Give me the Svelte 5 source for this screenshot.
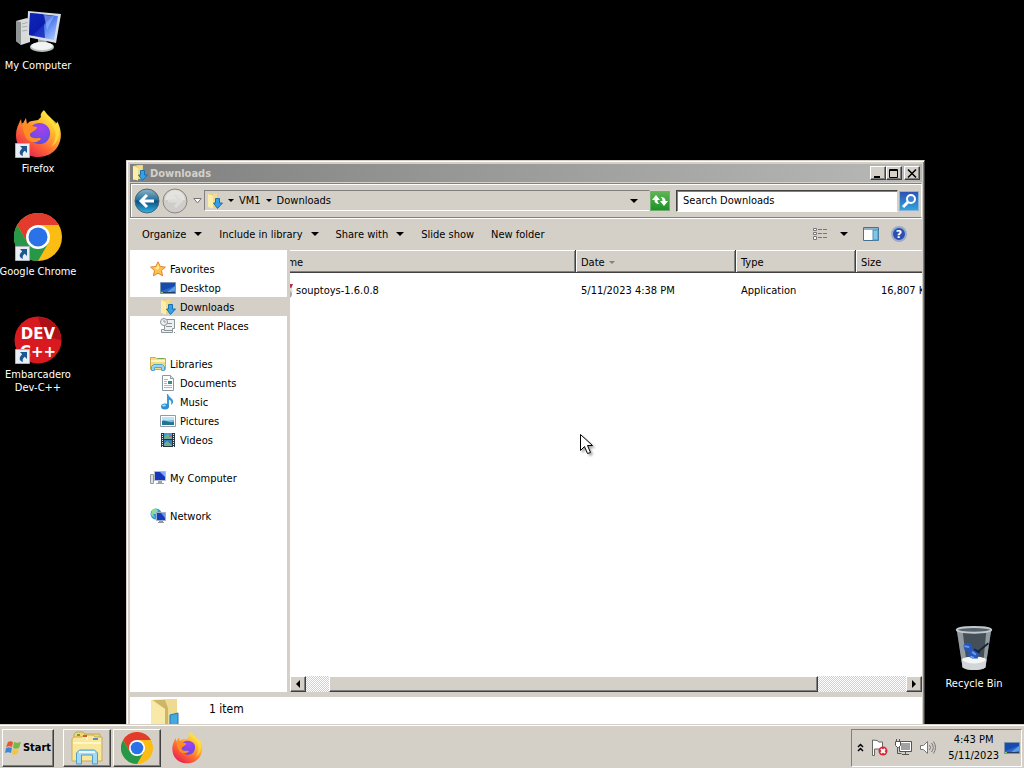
<script lang="ts">
  type IconName = string;

  interface NavItem {
    label: string;
    icon: IconName;
  }

  interface NavGroup extends NavItem {
    items: NavItem[];
  }

  const shortcuts = [
    { label: 'My Computer', icon: 'computer', link: false },
    { label: 'Firefox', icon: 'firefox', link: true },
    { label: 'Google Chrome', icon: 'chrome', link: true },
    { label: 'Embarcadero\nDev-C++', icon: 'devcpp', link: true }
  ];

  const navGroups: NavGroup[] = [
    {
      label: 'Favorites',
      icon: 'star',
      items: [
        { label: 'Desktop', icon: 'screen' },
        { label: 'Downloads', icon: 'downloads' },
        { label: 'Recent Places', icon: 'recent' }
      ]
    },
    {
      label: 'Libraries',
      icon: 'libraries',
      items: [
        { label: 'Documents', icon: 'document' },
        { label: 'Music', icon: 'music' },
        { label: 'Pictures', icon: 'picture' },
        { label: 'Videos', icon: 'video' }
      ]
    },
    { label: 'My Computer', icon: 'pc', items: [] },
    { label: 'Network', icon: 'network', items: [] }
  ];

  const commands = [
    { label: 'Organize', menu: true },
    { label: 'Include in library', menu: true },
    { label: 'Share with', menu: true },
    { label: 'Slide show', menu: false },
    { label: 'New folder', menu: false }
  ];

  const files = [
    { name: 'souptoys-1.6.0.8', date: '5/11/2023 4:38 PM', type: 'Application', size: '16,807 KB' }
  ];

  let selected = $state('Downloads');
  let query = $state('');
</script>

{#snippet arrow()}
  <svg class="arrow" viewBox="0 0 8 4" width="8" height="4" aria-hidden="true"><path d="M0 0h8L4 4z" /></svg>
{/snippet}

{#snippet icon(name: IconName, size: number)}
  {#if name === 'computer'}
    <svg width={size} height={size} viewBox="0 0 48 48" aria-hidden="true">
      <defs>
        <linearGradient id="pc-screen" x1="0" y1="0" x2="1" y2="1">
          <stop offset="0" stop-color="#1a3fd0" /><stop offset=".45" stop-color="#0d1fa8" />
          <stop offset=".5" stop-color="#4a78f0" /><stop offset="1" stop-color="#b8d4ff" />
        </linearGradient>
      </defs>
      <path d="M2 14l11-3 3 2v22L7 38l-5-4z" fill="#d9dbdb" />
      <path d="M2 14l5 1v23l-5-4z" fill="#8f9494" />
      <path d="M8 17l7-2M8 20l7-1M8 24l7-1" stroke="#aaa" />
      <path d="M24 31l8 1 1 5h-9z" fill="#a3a7a8" />
      <ellipse cx="28" cy="40" rx="12" ry="5" fill="#b9bebe" />
      <ellipse cx="28" cy="39" rx="11" ry="4" fill="#f2f4f4" />
      <path d="M14 4l33 3-5 29-29-6z" fill="#d8dde4" />
      <path d="M16 6l28 3-4 24-25-5z" fill="url(#pc-screen)" />
      <path d="M16 6l13 1 2 24-16-3z" fill="#0b1cb0" opacity=".75" />
      <path d="M30 8l10 1-7 14z" fill="#9dbcff" opacity=".6" />
    </svg>
  {:else if name === 'firefox'}
    <svg width={size} height={size} viewBox="0 0 48 48" aria-hidden="true">
      <defs>
        <linearGradient id="ff-body" x1=".85" y1=".05" x2=".2" y2=".95">
          <stop offset="0" stop-color="#fff44f" /><stop offset=".35" stop-color="#ffb52e" />
          <stop offset=".65" stop-color="#ff6a35" /><stop offset="1" stop-color="#e8204f" />
        </linearGradient>
        <radialGradient id="ff-globe" cx=".55" cy=".25" r=".8">
          <stop offset="0" stop-color="#a640f0" /><stop offset="1" stop-color="#5a4fe0" />
        </radialGradient>
      </defs>
      <path d="M30 0c2 5 8 7 11 14 3-1 2-3 2-3 5 9 5 18 1 25-4 7-11 11-20 11C11 47 2 38 2 25c0-6 2-10 5-16l1 6 4-7 1 6c2-2 3-3 5-3l6-1 3-3c-1-3 1-5 3-7z" fill="url(#ff-body)" />
      <path d="M18 16c4-4 12-4 16 1 4 5 2 12-2 15-5 4-13 2-16-3-2-4 0-9 2-13z" fill="url(#ff-globe)" />
      <path d="M8 13c4 0 7 1 10 3l5 1c0 3-4 4-6 6-2 1-1 5 3 5 4 1 6-1 7 1-4 5-13 4-16-3-2-5-2-8-3-13z" fill="#ff8d22" />
      <path d="M29 2c1 6 8 9 11 16 3 7 1 14-3 19 7-4 10-12 7-22-3-5-11-8-13-14z" fill="#ffdf3c" opacity=".75" />
    </svg>
  {:else if name === 'chrome'}
    <svg width={size} height={size} viewBox="0 0 48 48" aria-hidden="true">
      <circle cx="24" cy="24" r="24" fill="#fbbc14" />
      <path d="M3.2 12A24 24 0 0 1 44.8 12H24L13.600 30z" fill="#e33b2e" />
      <path d="M3.2 12A24 24 0 0 0 24 48l10.400-18H13.600z" fill="#279847" />
      <circle cx="24" cy="24" r="12" fill="#fff" />
      <circle cx="24" cy="24" r="9.500" fill="#2b72e8" />
    </svg>
  {:else if name === 'devcpp'}
    <svg width={size} height={size} viewBox="0 0 48 48" aria-hidden="true">
      <circle cx="24" cy="24" r="23.500" fill="#d8191f" />
      <path d="M24 1a23 23 0 0 1 23 23L30 20z" fill="#ad1118" />
      <text x="24" y="23" text-anchor="middle" class="dev">DEV</text>
      <text x="24" y="41" text-anchor="middle" class="dev">C++</text>
    </svg>
  {:else if name === 'recycle'}
    <svg width={size} height={size} viewBox="0 0 48 48" aria-hidden="true">
      <path d="M6 4h36l-6 39c-4 4-20 4-24 0z" fill="#454f57" />
      <path d="M6 4h6l5 41-5-2zM42 4h-5l-4 41 3-2z" fill="#929ba0" />
      <path d="M11 35c7-4 19-4 26 0l-1 8c-4 4-20 4-24 0z" fill="#d2d6d6" />
      <path d="M12 36c6 4 18 4 24 0v-2c-6-3-18-3-24 0z" fill="#f4f5f5" />
      <path d="M13 20l4-3 4 2 1 5 4-1 3 5-1 6h-6l-5-3 2-4-5-2z" fill="#2456bd" />
      <path d="M14 21l5 1M22 27l4 3M20 32l4 1" stroke="#679bf0" stroke-width="2" />
      <path d="M28 27l11-9M24 24l6 4" stroke="#172333" stroke-width="2" />
      <ellipse cx="24" cy="4" rx="18" ry="3" fill="#556069" stroke="#c0c9ce" stroke-width="2" />
    </svg>
  {:else if name === 'star'}
    <svg width={size} height={size} viewBox="0 0 16 16" aria-hidden="true">
      <path d="M8 .8l2.200 4.700 5.200.6-3.900 3.500 1.100 5.200L8 12.200l-4.600 2.600 1.100-5.200L.6 6.100l5.200-.6z" fill="#ffc04a" stroke="#dc8733" />
      <path d="M8 3l1.400 3.500L8 9 4 7l2.600-.5z" fill="#ffec9e" />
    </svg>
  {:else if name === 'screen'}
    <svg width={size} height={size} viewBox="0 0 16 16" aria-hidden="true">
      <path d="M.5 2.500h15v11H.5z" fill="#2c66c9" stroke="#7995ad" />
      <path d="M1 3h14v3L1 11z" fill="#174bb0" /><path d="M6 13l9-7v5z" fill="#5b9de2" />
      <path d="M1 12h14v1H1z" fill="#263d61" /><path d="M1 12h2v1H1z" fill="#7fce59" />
    </svg>
  {:else if name === 'downloads'}
    <svg width={size} height={size} viewBox="0 0 16 16" aria-hidden="true">
      <path d="M1 1l5-1h5v14H6l-5 1z" fill="#ead27c" />
      <path d="M1 1l5 2v12.500L1 14z" fill="#fbedaa" /><path d="M6 1l4-1v13H6z" fill="#f2db8b" />
      <path d="M8.500 5.500h4V10h3L10.500 15.500 6.500 10h2z" fill="#36a0e2" stroke="#1672b5" />
    </svg>
  {:else if name === 'recent'}
    <svg width={size} height={size} viewBox="0 0 16 16" fill="#eef0f0" stroke="#8b9599" aria-hidden="true">
      <path d="M4.500 1.500h10v9h-2v4h-11v-3h3z" />
      <path d="M6 5.500h6M6 8.500h6M4 12.500h9M14 14.500h1" /><circle cx="4" cy="4" r="3.500" /><path d="M4 2v2h2" />
    </svg>
  {:else if name === 'libraries'}
    <svg width={size} height={size} viewBox="0 0 16 16" aria-hidden="true">
      <path d="M.5 1.500h5l1 1h9v11H.5z" fill="#f4dc83" stroke="#c8ac55" />
      <path d="M1 4h14v2H1z" fill="#fff5c0" /><path d="M8 2h6v1H8z" fill="#6fae58" />
      <path d="M1.500 14.500v-4l2-2h9l2 2v4h-3v-3h-7v3z" fill="#9ad4ec" stroke="#5aa3c9" />
    </svg>
  {:else if name === 'document'}
    <svg width={size} height={size} viewBox="0 0 16 16" aria-hidden="true">
      <path d="M2.500.5h8l3 3v12h-11z" fill="#fff" stroke="#8799a5" /><path d="M10.500.5v3h3" fill="#dfe9ef" stroke="#8799a5" />
      <path d="M4 4.500h4M4 6.500h3M4 8.500h3M4 10.500h8M4 12.500h8" stroke="#abb8c0" /><path d="M8 6h4v3H8z" fill="#398c80" />
    </svg>
  {:else if name === 'music'}
    <svg width={size} height={size} viewBox="0 0 16 16" aria-hidden="true">
      <path d="M8 0c1 4 6 4 5 9l-2 2c1-4-1-5-2-5v7H7V0z" fill="#3c9bd6" />
      <ellipse cx="5" cy="12.500" rx="4" ry="3" fill="#2f8fd0" /><ellipse cx="4" cy="11.500" rx="2" ry="1" fill="#9cdcf8" />
    </svg>
  {:else if name === 'picture'}
    <svg width={size} height={size} viewBox="0 0 16 16" aria-hidden="true">
      <path d="M.5 2.500h15v11H.5z" fill="#fff" stroke="#8f9ca5" /><path d="M2 4h12v8H2z" fill="#6db9e4" />
      <path d="M2 4h12v3L2 8z" fill="#bce3f5" /><path d="M2 8c3-2 5 2 12 1v3H2z" fill="#237392" />
    </svg>
  {:else if name === 'video'}
    <svg width={size} height={size} viewBox="0 0 16 16" aria-hidden="true">
      <path d="M1 1h14v14H1z" fill="#26363f" /><path d="M4 1h8v6H4z" fill="#3f9cd4" /><path d="M4 8h8v6H4z" fill="#347dc1" />
      <path d="M4 5l4-3 4 4v1H4zM4 12l3-3 5 4v1H4z" fill="#73ac91" /><path d="M9 3h3v2H9z" fill="#c26861" />
      <path d="M2.500 2v13M13.500 2v13" stroke="#e8f1f4" stroke-dasharray="1 1" />
    </svg>
  {:else if name === 'pc'}
    <svg width={size} height={size} viewBox="0 0 16 16" aria-hidden="true">
      <path d="M.5 4.500h3v9h-3z" fill="#dde0e0" stroke="#949a9c" /><path d="M4.500 1.500h11v9h-11z" fill="#1738ba" stroke="#b6bdc9" />
      <path d="M10 2h5v5z" fill="#7faaf4" /><path d="M8 11h4v2h2v1H6v-1h2z" fill="#9ca3aa" />
    </svg>
  {:else if name === 'network'}
    <svg width={size} height={size} viewBox="0 0 16 16" aria-hidden="true">
      <circle cx="6" cy="6" r="5.500" fill="#2f99d7" /><path d="M2 2l4-2 2 3-2 3H3l2 4-4-3z" fill="#8cdb9b" />
      <path d="M6.500 4.500h9v8h-9z" fill="#173bc0" stroke="#9eb0c5" /><path d="M11 5h4v5z" fill="#6497ed" />
      <path d="M9 13h4v1h1v1H8v-1h1z" fill="#8d979f" />
    </svg>
  {:else if name === 'explorer'}
    <svg width={size} height={size} viewBox="0 0 34 34" aria-hidden="true">
      <path d="M4 3l2-2h7l2 2h15v14H4z" fill="#efd675" stroke="#c7a851" />
      <path d="M2 8l2-2h8l2-2h9l2 2h7v24H2z" fill="#f9e79b" stroke="#c9ad59" />
      <path d="M3 12h28M17 5v4" stroke="#fff6c8" stroke-width="2" />
      <path d="M7 3h3v2H7z" fill="#62a451" /><path d="M13 4h4v2h-4z" fill="#d35a3d" /><path d="M23 7h5v2h-5z" fill="#5396c5" />
      <path d="M6.500 33v-11l3-3h15l3 3v11h-5v-9h-11v9z" fill="#a6daf0" stroke="#4f9fca" />
      <path d="M9 21h16" stroke="#e6f8ff" stroke-width="2" />
    </svg>
  {/if}
{/snippet}

<div class="screen">
  <main class="desktop">
    <div class="shortcuts">
      {#each shortcuts as item}
        <button class="shortcut">
          <span class="shortcut-icon">
            {@render icon(item.icon, 48)}
            {#if item.link}
              <svg class="link-mark" viewBox="0 0 15 15" width="15" height="15" aria-hidden="true">
                <path d="M.5.5h14v14H.5z" fill="#e8eef3" stroke="#a9b4bd" />
                <path d="M5 3h7v7L9.800 7.800C7.500 9.500 7.400 11 8 13 4 12 3.500 8.500 7.200 5.200z" fill="#1d5791" />
              </svg>
            {/if}
          </span>
          <span>{item.label}</span>
        </button>
      {/each}
    </div>

    <button class="shortcut bin">
      <span class="shortcut-icon">{@render icon('recycle', 46)}</span>
      <span>Recycle Bin</span>
    </button>

    <section class="window" aria-label="Downloads">
      <header class="title-bar">
        {@render icon('downloads', 16)}
        <h1>Downloads</h1>
        <div class="caption-buttons">
          <button class="raised" aria-label="Minimize">
            <svg viewBox="0 0 10 9" width="10" height="9"><path d="M1 7h6v2H1z" /></svg>
          </button>
          <button class="raised" aria-label="Maximize">
            <svg viewBox="0 0 10 9" width="10" height="9"><path d="M.5.5h8v8h-8zM0 1.500h9" fill="none" stroke="#000" /></svg>
          </button>
          <button class="raised close" aria-label="Close">
            <svg viewBox="0 0 10 9" width="10" height="9"><path d="M1 .5l8 8M9 .5l-8 8" stroke="#000" stroke-width="1.500" /></svg>
          </button>
        </div>
      </header>

      <div class="address-row">
        <button class="round" aria-label="Back">
          <svg viewBox="0 0 26 26" width="26" height="26">
            <defs>
              <linearGradient id="back-fill" x1="0" y1="0" x2="0" y2="1">
                <stop offset="0" stop-color="#8fb4c6" /><stop offset=".45" stop-color="#28719c" />
                <stop offset=".5" stop-color="#0b4f82" /><stop offset="1" stop-color="#2fb5e8" />
              </linearGradient>
            </defs>
            <circle cx="13" cy="13" r="12" fill="url(#back-fill)" stroke="#4b6675" />
            <path d="M20 13H8M13 7l-6 6 6 6" fill="none" stroke="#fff" stroke-width="3" />
          </svg>
        </button>
        <button class="round" aria-label="Forward" disabled>
          <svg viewBox="0 0 26 26" width="26" height="26">
            <circle cx="13" cy="13" r="12" fill="#cfcdc8" stroke="#878682" />
            <path d="M3 12a10 10 0 0 1 20 0z" fill="#e5e3df" />
            <path d="M6 13h12M13 7l6 6-6 6" fill="none" stroke="#dedcd8" stroke-width="3" />
          </svg>
        </button>
        <button class="recent-pages" aria-label="Recent pages">
          <svg viewBox="0 0 9 6" width="9" height="6"><path d="M.8.5h7.400L4.500 5z" fill="#fff" stroke="#777" /></svg>
        </button>
        <nav class="address" aria-label="Address">
          {@render icon('downloads', 16)}
          <button class="crumb-arrow small" aria-label="Locations">{@render arrow()}</button>
          <button>VM1</button>
          <button class="crumb-arrow small" aria-label="Folders in VM1">{@render arrow()}</button>
          <button>Downloads</button>
          <button class="history" aria-label="Previous locations">{@render arrow()}</button>
        </nav>
        <button class="refresh" aria-label="Refresh">
          <svg viewBox="0 0 18 18" width="18" height="18">
            <path d="M1 8l4-5 4 5H6.500c0 2 .5 3 2 4C5 12 3.500 10.500 3.500 8z" fill="#fff" />
            <path d="M17 9l-4 5-4-5h2.500c0-2-.5-3-2-4 3.500 0 5 1.500 5 4z" fill="#fff" />
          </svg>
        </button>
        <input class="search" type="text" aria-label="Search" placeholder="Search Downloads" bind:value={query} />
        <button class="search-go" aria-label="Start search">
          <svg viewBox="0 0 18 18" width="18" height="18">
            <circle cx="11" cy="7" r="4" fill="#3c82d2" stroke="#fff" stroke-width="2" /><path d="M8 10l-5 5" stroke="#fff" stroke-width="3" />
          </svg>
        </button>
      </div>

      <div class="toolbar">
        {#each commands as command}
          <button>
            {command.label}
            {#if command.menu}{@render arrow()}{/if}
          </button>
        {/each}
        <div class="view-tools">
          <button aria-label="Change your view">
            <svg viewBox="0 0 16 14" width="16" height="14">
              <path d="M1.500 1.500h3v2h-3zM1.500 5.500h3v2h-3zM1.500 9.500h3v3h-3z" fill="#fff" stroke="#777" />
              <path d="M6 2.500h10M6 6.500h10M6 10.500h10" stroke="#777" stroke-dasharray="4 1" />
            </svg>
          </button>
          <button class="more-views" aria-label="More views">{@render arrow()}</button>
          <button class="preview" aria-label="Show the preview pane">
            <svg viewBox="0 0 16 14" width="16" height="14">
              <path d="M.5.5h15v13H.5z" fill="#fff" stroke="#49718f" /><path d="M1 1h14v2H1z" fill="#8fb2c9" />
              <path d="M10 3h5v10h-5z" fill="#7fc6e8" stroke="#4b91b9" />
            </svg>
          </button>
          <button class="help" aria-label="Get help">
            <svg viewBox="0 0 16 16" width="16" height="16">
              <circle cx="8" cy="8" r="7" fill="#2a4fae" stroke="#9aa9cc" stroke-width="2" />
              <text x="8" y="12" text-anchor="middle" class="question">?</text>
            </svg>
          </button>
        </div>
      </div>

      <div class="content">
        <nav class="sidebar" aria-label="Folders">
          {#each navGroups as group}
            <ul>
              <li>
                <button class="nav-row">{@render icon(group.icon, 16)}<span>{group.label}</span></button>
              </li>
              {#each group.items as item}
                <li>
                  <button class="nav-row child" class:selected={selected === item.label} onclick={() => (selected = item.label)}>
                    {@render icon(item.icon, 16)}<span>{item.label}</span>
                  </button>
                </li>
              {/each}
            </ul>
          {/each}
        </nav>

        <div class="list-pane">
          <div class="list">
            <table>
              <colgroup><col class="col-name" /><col class="col-date" /><col class="col-type" /><col class="col-size" /></colgroup>
              <thead>
                <tr>
                  <th>Name</th>
                  <th><span class="sorted">Date {@render arrow()}</span></th>
                  <th>Type</th>
                  <th>Size</th>
                </tr>
              </thead>
              <tbody>
                {#each files as file}
                  <tr>
                    <td>
                      <span class="file">
                        <svg viewBox="0 0 16 16" width="16" height="16" aria-hidden="true">
                          <path d="M2 1h14l-2 5H2z" fill="#b8324a" /><circle cx="10" cy="11" r="5" fill="#a9a9a9" /><path d="M13 5l2 4" stroke="#ddd" stroke-width="2" />
                        </svg>
                        {file.name}
                      </span>
                    </td>
                    <td>{file.date}</td>
                    <td>{file.type}</td>
                    <td class="size">{file.size}</td>
                  </tr>
                {/each}
              </tbody>
            </table>
          </div>
          <div class="scrollbar">
            <button class="raised" aria-label="Scroll left"><svg viewBox="0 0 4 8" width="4" height="8"><path d="M4 0v8L0 4z" /></svg></button>
            <div class="track"><div class="thumb"></div></div>
            <button class="raised" aria-label="Scroll right"><svg viewBox="0 0 4 8" width="4" height="8"><path d="M0 0v8l4-4z" /></svg></button>
          </div>
        </div>
      </div>

      <footer class="details">
        <svg viewBox="0 0 32 50" width="32" height="50" aria-hidden="true">
          <path d="M1 1l16-1h10v42H9z" fill="#eedb91" /><path d="M3 1h12l3 8v34l-3-1V10z" fill="#cdb668" />
          <path d="M1 1l14 9v39L1 44z" fill="#f8e9a9" />
          <path d="M20 16l8-2v15h4L23 42 15 29h5z" fill="#45a8de" stroke="#1f78b4" />
        </svg>
        <span>1 item</span>
      </footer>
    </section>

    <svg class="pointer" viewBox="0 0 13 21" width="13" height="21" aria-hidden="true">
      <path d="M.5.5v16l4-4 3 7 3-1-3-7h5z" fill="#fff" stroke="#000" />
    </svg>
  </main>

  <footer class="taskbar">
    <button class="start raised">
      <svg viewBox="0 0 16 16" width="16" height="16" aria-hidden="true">
        <path d="M3 2c2-1 3-1 5 0L7 7C5 6 3 6 1 7z" fill="#e5572f" /><path d="M9 2c2 1 4 1 7 0l-2 6c-2 1-4 1-6 0z" fill="#79b742" />
        <path d="M1 8c2-1 4-1 6 0l-1 5c-2-1-4-1-6 0z" fill="#3c87d0" /><path d="M8 9c2 1 4 1 6 0l-2 5c-2 1-4 1-5 0z" fill="#f7c437" />
      </svg>
      Start
    </button>
    <button class="task raised" aria-label="Windows Explorer">{@render icon('explorer', 34)}</button>
    <button class="task raised" aria-label="Google Chrome">{@render icon('chrome', 32)}</button>
    <button class="task" aria-label="Firefox">{@render icon('firefox', 32)}</button>

    <div class="tray">
      <button aria-label="Show hidden icons">
        <svg viewBox="0 0 7 9" width="7" height="9"><path d="M1 4l2.500-2.500L6 4M1 8l2.500-2.500L6 8" fill="none" stroke="#000" stroke-width="1.500" /></svg>
      </button>
      <button aria-label="Action Center">
        <svg viewBox="0 0 17 17" width="17" height="17">
          <path d="M1.500 1v15.500h2V10h8V3h-4l-1-1.500z" fill="#fff" stroke="#666" />
          <circle cx="12" cy="12" r="4.500" fill="#d42b3a" /><path d="M10 10l4 4M14 10l-4 4" stroke="#fff" stroke-width="2" />
        </svg>
      </button>
      <button aria-label="Network">
        <svg viewBox="0 0 17 17" width="17" height="17">
          <path d="M4.500 2.500h12v10h-12z" fill="#a2a2a2" stroke="#555" /><path d="M5.500 3.500h10v8h-10z" fill="none" stroke="#fff" />
          <path d="M7 15.500h7M10.500 13v2" fill="none" stroke="#555" /><path d="M2.500 8v6.500h4" fill="none" stroke="#555" />
          <path d="M.5 2.500h5v4l-2 2h-1l-2-2zM1.500 0v2M4.500 0v2" fill="#fff" stroke="#555" />
        </svg>
      </button>
      <button aria-label="Volume">
        <svg viewBox="0 0 17 17" width="17" height="17" fill="none" stroke="#777">
          <path d="M1.500 6.500h3l4-4v12l-4-4h-3z" fill="#fff" /><path d="M10.500 6q2 2.500 0 5M12.500 4q3.500 4.500 0 9M14.500 2.500q4 6 0 12" />
        </svg>
      </button>
      <time datetime="2023-05-11T16:43">4:43 PM<br />5/11/2023</time>
      <button aria-label="Show desktop">{@render icon('screen', 16)}</button>
    </div>
  </footer>
</div>

<style>
  :global(body) {
    margin: 0;
    background: #000;
  }

  .screen {
    display: flex;
    flex-direction: column;
    height: 100vh;
    overflow: hidden;
    font: 11px/13px Tahoma, 'DejaVu Sans Condensed', 'DejaVu Sans', sans-serif;
    color: #000;
    cursor: default;
  }

  button {
    display: flex;
    align-items: center;
    justify-content: center;
    box-sizing: border-box;
    flex: none;
    margin: 0;
    padding: 0;
    border: 0;
    background: none;
    font: inherit;
    color: inherit;
    white-space: nowrap;
  }

  svg {
    display: block;
    flex: none;
  }

  .raised {
    background: #d4d0c8;
    border: 1px solid;
    border-color: #fff #404040 #404040 #fff;
    box-shadow: inset -1px -1px #808080;
  }

  .desktop {
    position: relative;
    flex: 1;
    min-height: 0;
    overflow: hidden;
    background: #000;
  }

  .shortcuts {
    display: flex;
    flex-direction: column;
    width: 76px;
  }

  .shortcut {
    flex-direction: column;
    justify-content: flex-start;
    gap: 4px;
    width: 76px;
    height: 103px;
    padding-top: 7px;
    color: #fff;
    white-space: pre;
  }

  .shortcut-icon {
    position: relative;
    display: flex;
    align-items: center;
    justify-content: center;
    width: 48px;
    height: 48px;
  }

  .link-mark {
    position: absolute;
    left: 1px;
    bottom: 0;
  }

  .dev {
    font: bold 15px 'DejaVu Sans', sans-serif;
    fill: #fff;
  }

  .bin {
    position: absolute;
    right: 12px;
    bottom: 3px;
  }

  .window {
    position: absolute;
    top: 160px;
    right: 99px;
    bottom: -40px;
    left: 126px;
    display: flex;
    flex-direction: column;
    box-sizing: border-box;
    padding: 2px 2px 2px 3px;
    border: 1px solid;
    border-color: #d4d0c8 #404040 #404040 #d4d0c8;
    background: #d4d0c8;
    box-shadow: inset 1px 1px #fff, inset -1px -1px #808080;
  }

  .title-bar {
    display: flex;
    align-items: center;
    gap: 2px;
    height: 18px;
    margin: 1px 0;
    padding: 0 2px;
    background: linear-gradient(90deg, #808080, #b8b8b6);
    color: #d4d0c8;
  }

  h1 {
    flex: 1;
    margin: 0;
    font-size: 11px;
    font-weight: bold;
  }

  .caption-buttons {
    display: flex;
  }

  .caption-buttons button {
    width: 16px;
    height: 14px;
  }

  .caption-buttons .close {
    margin-left: 2px;
  }

  .address-row {
    display: flex;
    align-items: center;
    box-sizing: border-box;
    height: 35px;
    padding: 0 2px 0 3px;
    border: 1px solid;
    border-color: #808080 #fff #808080 #808080;
    box-shadow: inset 1px 1px #fff, 0 1px #fff;
  }

  .round {
    margin-right: 2px;
  }

  .recent-pages {
    width: 14px;
  }

  .address {
    display: flex;
    align-items: center;
    gap: 5px;
    flex: 1;
    box-sizing: border-box;
    height: 21px;
    padding-left: 2px;
    border: 1px solid;
    border-color: #808080 #d4d0c8 #fff #808080;
  }

  .history {
    width: 30px;
    margin-left: auto;
  }

  .crumb-arrow.small .arrow {
    width: 6px;
    height: 3px;
  }

  .refresh {
    width: 20px;
    height: 20px;
    border: 1px solid #6fae6d;
    background: linear-gradient(#5cb554, #1c9327);
  }

  .search {
    box-sizing: border-box;
    width: 222px;
    height: 22px;
    margin: 0 1px 0 6px;
    padding: 0 6px;
    border: 1px solid;
    border-color: #404040 #d4d0c8 #fff #404040;
    outline: 0;
    background: #fff;
    box-shadow: inset 1px 1px #808080;
    font: inherit;
  }

  .search::placeholder {
    color: #000;
    opacity: 1;
  }

  .search-go {
    width: 20px;
    height: 20px;
    border: 1px solid #8fb4d8;
    background: linear-gradient(#2c53b4, #2fa4dc);
  }

  .toolbar {
    display: flex;
    align-items: center;
    gap: 17px;
    height: 32px;
    padding: 0 15px 0 12px;
  }

  .toolbar button {
    gap: 8px;
  }

  .view-tools {
    display: flex;
    align-items: center;
    margin-left: auto;
  }

  .more-views {
    margin-left: 12px;
  }

  .preview {
    margin-left: 15px;
  }

  .help {
    margin-left: 12px;
  }

  .question {
    font: bold 11px 'DejaVu Sans', sans-serif;
    fill: #fff;
  }

  .content {
    display: flex;
    flex: 1;
    min-height: 0;
  }

  .sidebar {
    box-sizing: border-box;
    width: 157px;
    margin-right: 3px;
    padding-top: 9px;
    overflow: hidden;
    background: #fff;
  }

  ul {
    margin: 0 0 19px;
    padding: 0;
    list-style: none;
  }

  .nav-row {
    gap: 4px;
    justify-content: flex-start;
    width: 100%;
    height: 19px;
    padding-left: 20px;
  }

  .nav-row span {
    padding-top: 2px;
  }

  .nav-row.child {
    padding-left: 30px;
  }

  .nav-row.selected {
    background: #d4d0c8;
  }

  .list-pane {
    display: flex;
    flex-direction: column;
    flex: 1;
    min-width: 0;
    background: #fff;
  }

  .list {
    flex: 1;
    overflow: hidden;
  }

  table {
    width: 670px;
    margin-left: -21px;
    border-collapse: separate;
    border-spacing: 0;
    table-layout: fixed;
  }

  .col-name {
    width: 307px;
  }

  .col-date {
    width: 160px;
  }

  .col-type {
    width: 120px;
  }

  th {
    box-sizing: border-box;
    height: 23px;
    padding: 2px 5px 0;
    border-right: 1px solid #404040;
    border-bottom: 1px solid #404040;
    background: #d4d0c8;
    box-shadow: inset 1px 1px #fff, inset -1px -1px #808080;
    font-weight: normal;
    text-align: left;
  }

  .sorted,
  .file {
    display: flex;
    align-items: center;
    gap: 4px;
  }

  .sorted .arrow {
    width: 6px;
    height: 3px;
    fill: #808080;
  }

  td {
    height: 19px;
    padding: 8px 5px 0;
    white-space: nowrap;
  }

  .file {
    gap: 3px;
    padding-left: 3px;
  }

  td.size {
    padding-right: 7px;
    text-align: right;
  }

  .scrollbar {
    display: flex;
    height: 16px;
  }

  .scrollbar button {
    width: 16px;
    height: 16px;
  }

  .track {
    flex: 1;
    padding: 0 14% 0 23px;
    background: repeating-conic-gradient(#d4d0c8 0 25%, #fff 0 50%) 0 0 / 2px 2px;
  }

  .thumb {
    box-sizing: border-box;
    height: 16px;
    border: 1px solid;
    border-color: #fff #404040 #404040 #fff;
    background: #d4d0c8;
    box-shadow: inset -1px -1px #808080;
  }

  .details {
    display: flex;
    align-items: flex-start;
    gap: 27px;
    box-sizing: border-box;
    height: 64px;
    margin-top: 5px;
    padding: 2px 20px;
    background: #fff;
    font-size: 12px;
    line-height: 20px;
  }

  .pointer {
    position: absolute;
    top: 434px;
    left: 580px;
    filter: drop-shadow(2px 2px 1px #0005);
  }

  .taskbar {
    display: flex;
    align-items: center;
    box-sizing: border-box;
    height: 44px;
    padding: 2px 2px 0;
    border-top: 1px solid #d4d0c8;
    background: #d4d0c8;
    box-shadow: inset 0 1px #fff;
  }

  .start {
    gap: 2px;
    width: 52px;
    height: 38px;
    margin-right: 9px;
    font-weight: bold;
  }

  .task {
    width: 48px;
    height: 38px;
    margin-right: 2px;
  }

  .tray {
    display: flex;
    align-items: center;
    gap: 7px;
    box-sizing: border-box;
    height: 38px;
    margin-left: auto;
    padding: 0 1px 0 5px;
    border: 1px solid;
    border-color: #808080 #fff #fff #808080;
  }

  time {
    margin: 0 -2px 0 5px;
    line-height: 16px;
    text-align: center;
  }
</style>
